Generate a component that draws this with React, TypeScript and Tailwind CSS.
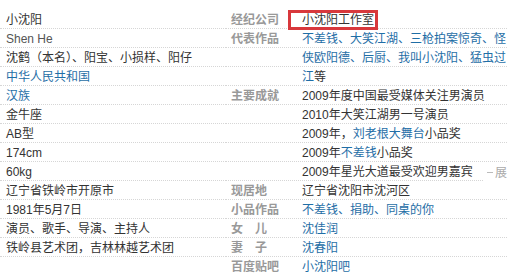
import React from "react";

const BLUE = "text-[#1f6ea6]";

type Seg = { t: string; link?: boolean };

function Txt({ segs }: { segs: Seg[] }) {
  return (
    <>
      {segs.map((s, i) => (
        <span key={i} className={s.link ? BLUE : ""}>
          {s.t}
        </span>
      ))}
    </>
  );
}

const leftRows: Seg[][] = [
  [{ t: "小沈阳" }],
  [{ t: "Shen He" }],
  [{ t: "沈鹤（本名）、阳宝、小损样、阳仔" }],
  [{ t: "中华人民共和国", link: true }],
  [{ t: "汉族", link: true }],
  [{ t: "金牛座" }],
  [{ t: "AB型" }],
  [{ t: "174cm" }],
  [{ t: "60kg" }],
  [{ t: "辽宁省铁岭市开原市" }],
  [{ t: "1981年5月7日" }],
  [{ t: "演员、歌手、导演、主持人" }],
  [{ t: "铁岭县艺术团，吉林林越艺术团" }],
];

const rightRows: { label: string; segs: Seg[] }[] = [
  { label: "经纪公司", segs: [{ t: "小沈阳工作室" }] },
  {
    label: "代表作品",
    segs: [{ t: "不差钱、大笑江湖、三枪拍案惊奇、怪", link: true }],
  },
  { label: "", segs: [{ t: "侠欧阳德、后厨、我叫小沈阳、猛虫过", link: true }] },
  { label: "", segs: [{ t: "江", link: true }, { t: "等" }] },
  { label: "主要成就", segs: [{ t: "2009年度中国最受媒体关注男演员" }] },
  { label: "", segs: [{ t: "2010年大笑江湖男一号演员" }] },
  {
    label: "",
    segs: [{ t: "2009年，" }, { t: "刘老根大舞台", link: true }, { t: "小品奖" }],
  },
  { label: "", segs: [{ t: "2009年" }, { t: "不差钱", link: true }, { t: "小品奖" }] },
  { label: "", segs: [{ t: "2009年星光大道最受欢迎男嘉宾" }] },
  { label: "现居地", segs: [{ t: "辽宁省沈阳市沈河区" }] },
  { label: "小品作品", segs: [{ t: "不差钱、捐助、同桌的你", link: true }] },
  { label: "女　儿", segs: [{ t: "沈佳润", link: true }] },
  { label: "妻　子", segs: [{ t: "沈春阳", link: true }] },
  { label: "百度贴吧", segs: [{ t: "小沈阳吧", link: true }] },
];

export default function App() {
  return (
    <div
      className="relative w-[507px] h-[276px] overflow-hidden bg-white text-[12px] leading-[18px] text-[#333]"
      style={{ fontFamily: '"Liberation Sans", Arial, "Noto Sans CJK SC", sans-serif' }}
    >
      <div className="flex pt-[10px]">
        <div className="w-[226px] shrink-0">
          {leftRows.map((r, i) => (
            <div
              key={i}
              className="h-[19px] pt-[1px] border-b border-dotted border-[#d6d6d6] pl-[6px] whitespace-nowrap overflow-hidden"
            >
              <span className={i === 1 ? "text-[#555]" : ""}>
                <Txt segs={r} />
              </span>
            </div>
          ))}
        </div>
        <div className="flex-1 min-w-0">
          {rightRows.map((r, i) => (
            <div
              key={i}
              className={`flex h-[19px] pt-[1px] ${
                i === rightRows.length - 1 ? "" : "border-b border-dotted border-[#d6d6d6]"
              }`}
            >
              <div className="w-[72px] shrink-0 pl-[5px] font-bold text-[#999] whitespace-nowrap">
                {r.label}
              </div>
              <div className="flex-1 min-w-0 pl-[4px] whitespace-nowrap overflow-hidden">
                <Txt segs={r.segs} />
              </div>
            </div>
          ))}
        </div>
      </div>
      {/* red highlight box */}
      <div className="absolute left-[288px] top-[10px] w-[90px] h-[20px] border-[3px] border-[#d8383c]" />
      {/* expand link */}
      <div className="absolute left-[484px] top-[162px] h-[20px] pl-[3px] pt-[1px] bg-white flex items-center gap-[2px] text-[#aaa] whitespace-nowrap">
        <span className="inline-block w-[6px] h-px bg-[#bbb]" />
        <span>展开</span>
      </div>
    </div>
  );
}
